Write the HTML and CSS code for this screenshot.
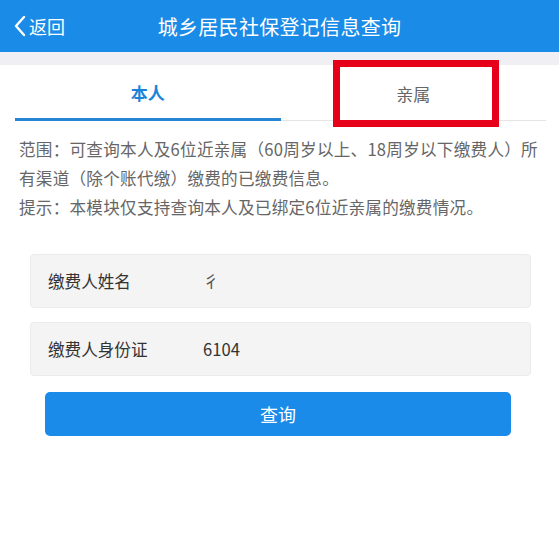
FILE: index.html
```html
<!DOCTYPE html>
<html lang="zh-CN">
<head>
<meta charset="utf-8">
<title>城乡居民社保登记信息查询</title>
<link rel="stylesheet" href="styles.css">
</head>
<body>
<header class="topbar">
  <a class="back">
    <svg class="chev" viewBox="0 0 12 22" width="12" height="22"><path d="M10 2 L2 11 L10 20" fill="none" stroke="#fff" stroke-width="2.4" stroke-linecap="round" stroke-linejoin="round"/></svg>
    <span>返回</span>
  </a>
  <h1 class="title">城乡居民社保登记信息查询</h1>
</header>
<div class="band"></div>
<nav class="tabs">
  <div class="tab active">本人</div>
  <div class="tab">亲属</div>
  <div class="mark"></div>
</nav>
<div class="notes">
  <p class="note">范围：可查询本人及6位近亲属（60周岁以上、18周岁以下缴费人）所有渠道（除个账代缴）缴费的已缴费信息。</p>
  <p class="note">提示：本模块仅支持查询本人及已绑定6位近亲属的缴费情况。</p>
</div>
<form class="form">
  <div class="field"><span class="label">缴费人姓名</span><span class="value name">彳</span></div>
  <div class="field"><span class="label">缴费人身份证</span><span class="value">6104</span></div>
  <div class="btnwrap"><button type="button" class="btn">查询</button></div>
</form>
</body>
</html>
```
FILE: styles.css
```css
* { box-sizing: border-box; }
html, body { margin: 0; padding: 0; background: #fff; }
body {
  font-family: "Noto Sans CJK SC", "Noto Sans", sans-serif;
  color: #333;
  width: 559px;
}
.topbar {
  height: 52px;
  background: #1a8be6;
  position: relative;
  display: flex;
  align-items: center;
  justify-content: center;
}
.back {
  position: absolute;
  left: 14px;
  top: 0;
  height: 52px;
  display: flex;
  align-items: center;
  color: #fff;
  font-size: 18px;
  gap: 3px;
}
.chev { display: block; }
.title {
  margin: 0;
  font-size: 20px;
  font-weight: normal;
  color: #fff;
  letter-spacing: 0.3px;
}
.band { height: 13px; background: #efeff4; }
.tabs {
  position: relative;
  display: flex;
  margin: 0 13px 0 15px;
  border-bottom: 1px solid #e5e5e5;
  height: 56px;
}
.tab {
  flex: 1;
  display: flex;
  align-items: center;
  justify-content: center;
  font-size: 17px;
  color: #666;
  padding-top: 2px;
}
.tab.active {
  color: #1c84d8;
  font-weight: bold;
  border-bottom: 3px solid #2585d2;
  margin-bottom: -1px;
}
.mark {
  position: absolute;
  left: 318px;
  top: -5px;
  width: 166px;
  height: 67px;
  border: 7px solid #e60019;
}
.notes { padding: 14px 19px 0 19px; }
.note {
  margin: 0;
  font-size: 16.6px;
  line-height: 29px;
  letter-spacing: 0.25px;
  color: #666;
}
.form { padding: 32px 28px 0 30px; }
.field {
  height: 54px;
  background: #f4f4f4;
  border: 1px solid #ebebeb;
  border-radius: 4px;
  display: flex;
  align-items: center;
  padding-left: 17px;
  margin-bottom: 14px;
  font-size: 16.6px;
  color: #333;
}
.label { width: 155px; }
.value { color: #333; }
.value.name { color: #555; }
.btnwrap { padding: 2px 20px 0 15px; }
.btn {
  width: 100%;
  height: 44px;
  border: none;
  border-radius: 5px;
  background: #1a8be8;
  color: #fff;
  font-family: "Noto Sans CJK SC", sans-serif;
  font-size: 18px;
}
```
